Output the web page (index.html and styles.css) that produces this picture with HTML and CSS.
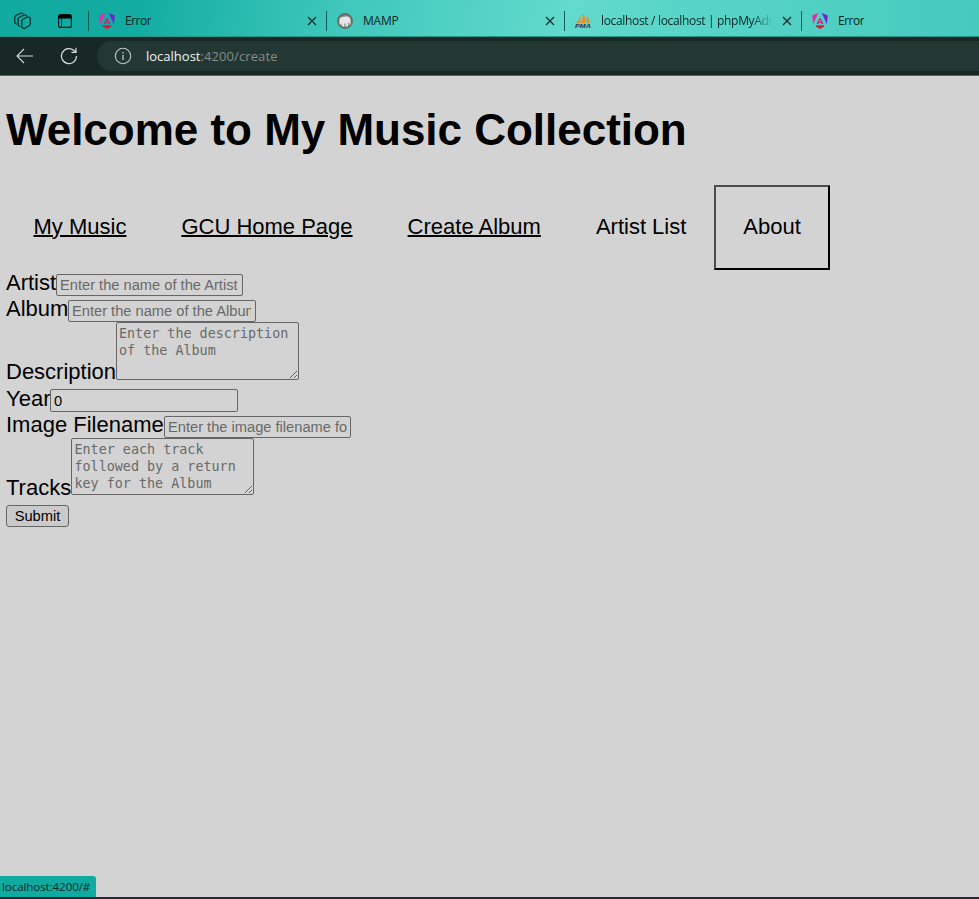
FILE: index.html
```html
<!DOCTYPE html>
<html lang="en">
<head>
<meta charset="utf-8">
<title>My Music Collection</title>
<link rel="stylesheet" href="styles.css">
</head>
<body>
<svg class="defs" width="0" height="0">
  <defs>
    <symbol id="angular" viewBox="0 0 16 16">
      <path fill="#e82aa8" d="M6.200 0 0.200 2.500 1.200 11.200z"/><path fill="#7020d8" d="M9.800 0 15.800 2.500 14.800 11.200z"/>
      <path fill="#d81c80" d="M8 4.200 4.500 11h2l.5-1.200h2L9.500 11h2zM8 6.500l.9 2H7.100z"/>
      <path fill="#dc1440" d="M4.200 12.300h7.600l.5 1.200L8 16l-4.300-2.500z"/>
    </symbol>
    <symbol id="close" viewBox="0 0 10 10"><path d="M1 1l8 8M9 1 1 9" fill="none" stroke="#10302e" stroke-width="1.300"/></symbol>
  </defs>
</svg>
<header class="tabs">
  <svg class="spaces" width="18" height="18" viewBox="0 0 18 18" fill="none" stroke="#082725" stroke-width="1.150" stroke-linejoin="round"><path d="M7.800 8.700Q7.800 7.900 8.500 7.500L13.300 5.100Q14 4.800 14.600 5.100L15.700 5.600Q16.300 5.900 16.300 6.600V12Q16.300 12.800 15.700 13.200L10.800 16.300Q10 16.700 9.300 16.300L8.400 15.800Q7.800 15.500 7.800 14.700zM6.300 14.400 4.900 13.700Q4.200 13.300 4.200 12.600V6.600Q4.200 5.900 4.900 5.500L10 2.900Q10.700 2.600 11.300 2.900L13 3.700M2.800 12.200 1.400 11.500Q.8 11.200.8 10.500V4.800Q.8 4.100 1.500 3.700L6.500 1.200Q7.200.9 7.800 1.200L9.500 2"/></svg>
  <svg class="tabmenu" width="14" height="14" viewBox="0 0 14 14"><rect x=".6" y=".6" width="12.800" height="12.800" rx="2" fill="none" stroke="#061615" stroke-width="1.100"/><path d="M.5 4.500V2.500a2 2 0 0 1 2-2h9a2 2 0 0 1 2 2v2z" fill="#000"/><path d="M3.500 4v9.500" stroke="#061615" stroke-width=".8"/></svg>
  <div class="tab"><svg class="fav"><use href="#angular"/></svg><span class="name error">Error</span><svg class="x"><use href="#close"/></svg></div>
  <div class="tab"><svg class="fav" viewBox="0 0 16 16"><circle cx="8" cy="8" r="7" fill="#8d8d8d" stroke="#696969" stroke-width="1.800"/><path d="M2.500 10.500V7c0-2.500 2-3.500 4.500-3 2.500-1 6.500-.5 6.500 3v4.500l-1.300.5V9.500L11 10v3.500H8.600V10.500H7.400v3H4.800v-3L3.500 12z" fill="#e6e6e6"/></svg><span class="name">MAMP</span><svg class="x"><use href="#close"/></svg></div>
  <div class="tab"><svg class="fav" viewBox="0 0 16 16"><path d="M5.500 2v8H1.500Q5 6 5.500 2zM8 .5Q11 5 10.500 10H7zM11.500 3q3.200 3 3.500 7h-3z" fill="#ef8a1d"/><text x="0" y="15.400" class="pma" textLength="16" lengthAdjust="spacingAndGlyphs">PMA</text></svg><span class="name long">localhost / localhost | phpMyAdmin</span><svg class="x"><use href="#close"/></svg></div>
  <div class="tab last"><svg class="fav"><use href="#angular"/></svg><span class="name error">Error</span></div>
</header>
<div class="toolbar">
  <svg class="back" width="18" height="16" viewBox="0 0 18 16" fill="none" stroke="#d5dbd9" stroke-width="1.100"><path d="M17 8H1M8 1 1 8l7 7"/></svg>
  <svg class="reload" width="18" height="18" viewBox="0 0 18 18" fill="none" stroke="#d5dbd9" stroke-width="1.200"><path d="M16.500 9A7.500 7.500 0 1 1 14 3.500L16 5M16 .8V5.300h-4.500"/></svg>
  <div class="address">
    <svg width="18" height="18" viewBox="0 0 18 18" fill="none" stroke="#c0c7c5" stroke-width="1.100"><circle cx="9" cy="9" r="7.700"/><path d="M9 8v5M9 5v1.400" stroke-width="1.300"/></svg>
    <span class="url"><b>localhost</b>:4200/create</span>
  </div>
</div>
<main>
  <h1>Welcome to My Music Collection</h1>
  <nav>
    <a class="link">My Music</a><a class="link">GCU Home Page</a><a class="link">Create Album</a><a>Artist List</a><a class="focus">About</a>
  </nav>
  <form>
    <div class="row"><label class="artist">Artist</label><input placeholder="Enter the name of the Artist"></div>
    <div class="row"><label class="album">Album</label><input class="wide clip" placeholder="Enter the name of the Album"></div>
    <div class="row tall"><label class="description">Description</label><textarea placeholder="Enter the description of the Album"></textarea></div>
    <div class="row"><label class="year">Year</label><input class="wide high" value="0"></div>
    <div class="row"><label class="image">Image Filename</label><input placeholder="Enter the image filename for the Album"></div>
    <div class="row tall"><label class="tracks">Tracks</label><textarea class="short" placeholder="Enter each track followed by a return key for the Album"></textarea></div>
    <button type="button">Submit</button>
  </form>
</main>
<div class="status">localhost:4200/#</div>
</body>
</html>
```
FILE: styles.css
```css
* { box-sizing: border-box; }
body { margin: 0; height: 899px; overflow: hidden; background: #d3d3d3; color: #000; font-family: "Liberation Sans", Arial, sans-serif; border-bottom: 2px solid #25272a; }
.defs { position: absolute; }
.tabs { height: 37px; display: flex; align-items: center; padding: 5px 0 0 14px; background: linear-gradient(100deg, #10aaa0 0, #12aca2 14%, #3fc8bb 35%, #62dacd 58%, #5ad6c9 67%, #45cabd 100%); border-bottom: 1px solid #219588; font: 12px "Open Sans", sans-serif; }
.spaces { flex: none; margin-right: 26px; }
.tabmenu { flex: none; margin-right: 16px; }
.tab { width: 238px; height: 20px; flex: none; display: flex; align-items: center; border-left: 1px solid #0b5b56; padding-left: 10px; }
.tab:nth-of-type(3) { width: 237px; }
.tab.last { width: auto; flex: 1; }
.fav { width: 16px; height: 16px; flex: none; margin-right: 10px; }
.name { line-height: 20px; white-space: nowrap; overflow: hidden; color: #0b2625; letter-spacing: -.2px; }
.name.error { letter-spacing: -.5px; }
.name.long { width: 172px; letter-spacing: -.33px; -webkit-mask-image: linear-gradient(90deg, #000 88%, transparent); mask-image: linear-gradient(90deg, #000 88%, transparent); }
.x { width: 10px; height: 10px; flex: none; margin-left: auto; margin-right: 9.500px; }
.pma { font: italic bold 6px "Liberation Sans", sans-serif; fill: #33305c; }
.toolbar { height: 39px; background: #172825; border-bottom: 1px solid #5a6361; display: flex; align-items: center; padding-left: 16px; }
.back { margin-right: 26px; }
.reload { margin-right: 19px; }
.address { flex: 1; height: 30px; border-radius: 15px 0 0 15px; background: #233833; display: flex; align-items: center; padding-left: 17px; }
.url { margin-left: 14px; font: 13px "Open Sans", sans-serif; letter-spacing: .1px; color: #858b89; }
.url b { font-weight: 400; letter-spacing: 0; color: #f1f4f3; }
main { padding-left: 6px; }
h1 { margin: 28px 0 30px; font-size: 44px; line-height: 51px; letter-spacing: -.02px; white-space: nowrap; }
nav { display: flex; height: 85px; font-size: 22px; line-height: 26px; white-space: nowrap; }
nav a { padding: 27px 25.500px; border: 2px solid transparent; }
.link { text-decoration: underline; text-decoration-thickness: 2px; }
.focus { width: 116px; padding: 27px 27px 27px 27.500px; border-color: #4c4c4c #000 #000 #4c4c4c; }
.row { height: 26px; display: flex; align-items: flex-end; }
.row.tall { height: 64px; align-items: flex-start; }
label { flex: none; font-size: 22px; line-height: 26px; white-space: nowrap; }
.tall label { margin-top: 37px; }
.artist { width: 50px; }
.album { width: 62px; }
.description { width: 110px; }
.year { width: 44px; }
.image { width: 158px; }
.tracks { width: 65px; }
input { width: 187px; height: 22px; padding: 1px 3px; border: 1px solid #666; border-radius: 2px; background: transparent; font: 14.667px "Liberation Sans", sans-serif; outline: 0; }
.wide { width: 188px; }
.clip { padding-right: 4px; }
.high { height: 23px; }
textarea { display: block; width: 183px; height: 58px; padding: 2px; margin: 0; border: 1px solid #666; border-radius: 2px; background: transparent; font: 13.400px/17px "DejaVu Sans Mono", monospace; overflow: hidden; resize: both; }
.short { height: 57px; padding-left: 2.500px; }
::placeholder { color: #696969; opacity: 1; }
button { display: block; width: 63px; height: 22px; margin-top: 3px; padding: 0; border: 1px solid #666; border-radius: 3px; background: #cacaca; font: 14.667px "Liberation Sans", sans-serif; color: #000; }
.status { position: absolute; left: 0; bottom: 2px; width: 96px; height: 21px; padding-left: 2px; border-radius: 0 3px 0 0; background: #10aaa0; color: #0c2523; font: 11.500px/21px "Open Sans", sans-serif; letter-spacing: -.06px; white-space: nowrap; }
```
